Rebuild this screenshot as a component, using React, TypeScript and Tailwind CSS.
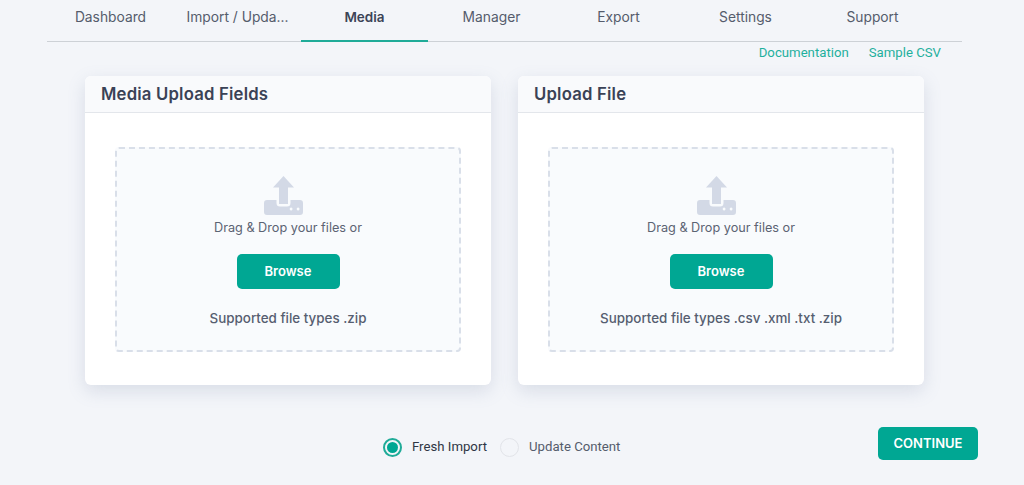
const TABS = ["Dashboard", "Import / Update", "Media", "Manager", "Export", "Settings", "Support"];

const CARDS = [
  { title: "Media Upload Fields", types: "Supported file types .zip" },
  { title: "Upload File", types: "Supported file types .csv .xml .txt .zip" },
];

function UploadIcon() {
  return (
    <svg width="39" height="39" viewBox="0 0 39 39" className="mr-[10px] block">
      <path fill="#d3d9e6" d="M19.5 0 30 11.5H24V28H15V11.5H9Z" />
      <path
        fill="#d3d9e6"
        fillRule="evenodd"
        d="M3 24H12.5V27A3.5 3.5 0 0 0 16 30.5H23A3.5 3.5 0 0 0 26.5 27V24H36A3 3 0 0 1 39 27V36A3 3 0 0 1 36 39H3A3 3 0 0 1 0 36V27A3 3 0 0 1 3 24ZM28.5 33a1.4 1.4 0 1 0 0 .01ZM35.5 33a1.4 1.4 0 1 0 0 .01Z"
      />
    </svg>
  );
}

function UploadCard({ title, types }: { title: string; types: string }) {
  return (
    <div className="h-[309px] w-[406px] overflow-hidden rounded-md bg-white shadow-[0_6px_18px_rgba(110,125,160,0.2)]">
      <div className="h-[37px] border-b border-[#e3e6eb] bg-[#f9fafc] pl-[16px] font-['Inter',sans-serif] text-[16.7px] leading-[36px] font-semibold tracking-[0.2px] text-[#3a4256]">
        {title}
      </div>
      <div className="px-[30px] pt-[34px]">
        <div className="flex h-[205px] flex-col items-center rounded-[4px] border-2 border-dashed border-[#d9dfe9] bg-[#f9fbfd] pt-[27px]">
          <UploadIcon />
          <p className="mt-[4px] font-['Inter',sans-serif] text-[12.7px] leading-[18px] text-[#5c6373]">
            Drag &amp; Drop your files or
          </p>
          <button className="mt-[17px] h-[35px] w-[103px] rounded-[5px] bg-[#00a793] font-['Inter',sans-serif] text-[13px] font-semibold text-white">
            Browse
          </button>
          <p className="mt-[19px] font-['Inter',sans-serif] text-[13.4px] leading-[20px] font-medium text-[#565e70]">
            {types}
          </p>
        </div>
      </div>
    </div>
  );
}

export default function App() {
  return (
    <div className="h-[485px] w-[1024px] overflow-hidden bg-[#f3f5f9]">
      <div className="ml-[47px] flex h-[42px] w-[915px] border-b border-[#cdd1d6]">
        {TABS.map((tab) => (
          <div
            key={tab}
            className={
              tab === "Media"
                ? "h-[42px] w-[127px] border-b-2 border-[#1fab98] pt-[8px] text-center font-['Inter',sans-serif] text-[13.5px] leading-[18px] font-semibold text-[#3c4457]"
                : "h-[41px] w-[127px] pt-[8px] text-center font-['Inter',sans-serif] text-[13.8px] leading-[18px] text-[#555c6c]"
            }
          >
            {tab === "Import / Update" ? "Import / Upda..." : tab}
          </div>
        ))}
      </div>

      <div className="mt-[2px] mr-[83px] flex h-[32px] justify-end gap-[20px] font-['Roboto',sans-serif] text-[13.2px] leading-[17px] text-[#1fb09d]">
        <span>Documentation</span>
        <span>Sample CSV</span>
      </div>

      <div className="ml-[85px] flex gap-[27px]">
        {CARDS.map((card) => (
          <UploadCard key={card.title} title={card.title} types={card.types} />
        ))}
      </div>

      <div className="mt-[42px] flex h-[40px] items-center pr-[46px] pl-[383px]">
        <span className="flex h-[19px] w-[19px] items-center justify-center rounded-full border-2 border-[#1fab98]">
          <span className="h-[11px] w-[11px] rounded-full bg-[#00a793]" />
        </span>
        <span className="ml-[10px] font-['Roboto',sans-serif] text-[13.2px] text-[#2f3644]">Fresh Import</span>
        <span className="ml-[13px] h-[19px] w-[19px] rounded-full border border-[#e2e4e9]" />
        <span className="ml-[10px] font-['Roboto',sans-serif] text-[13.2px] text-[#555c6c]">Update Content</span>
        <button className="ml-auto h-[33px] w-[100px] self-start rounded-[5px] bg-[#00a793] font-['Inter',sans-serif] text-[13px] font-semibold text-white">
          CONTINUE
        </button>
      </div>
    </div>
  );
}
